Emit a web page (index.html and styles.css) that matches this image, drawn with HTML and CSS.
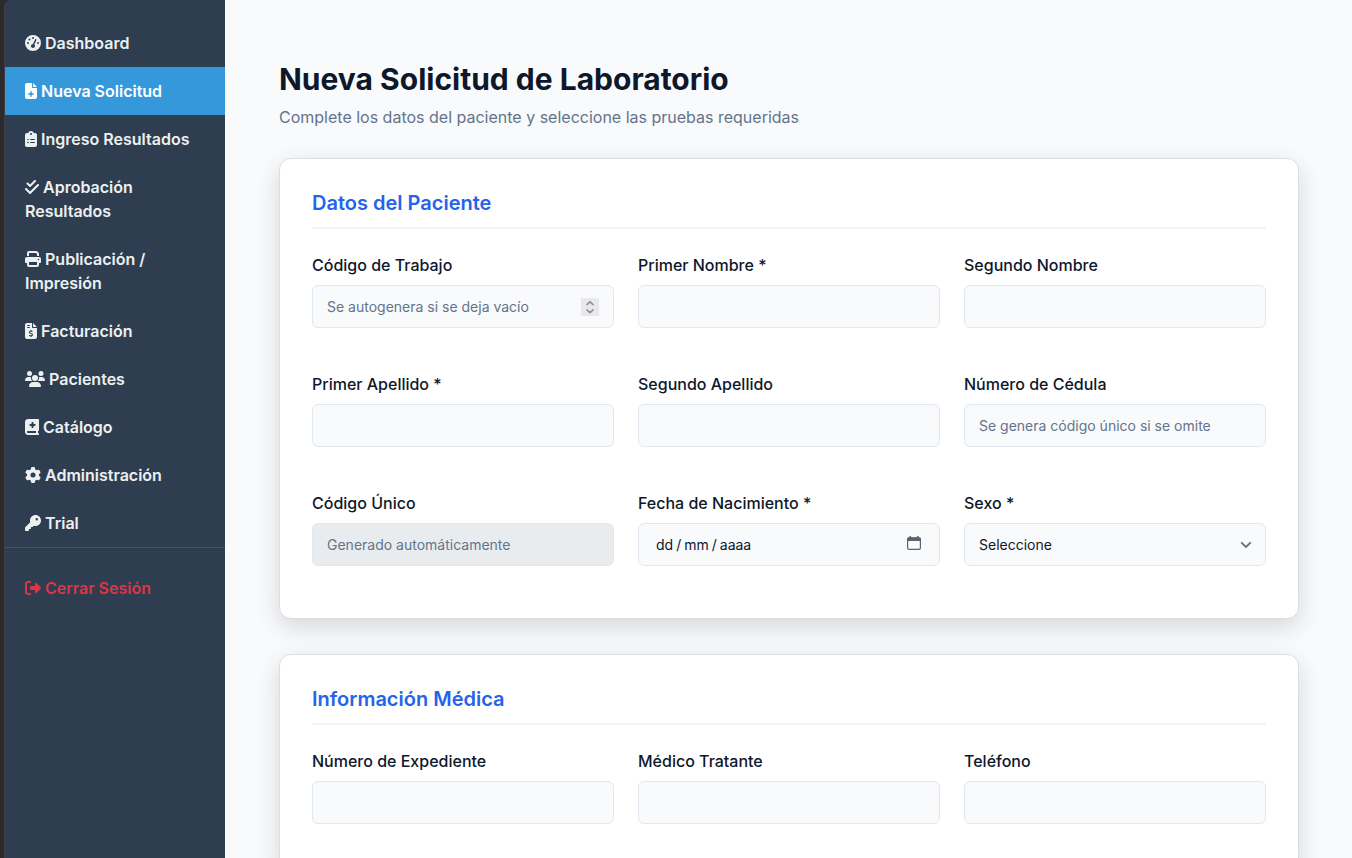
FILE: index.html
```html
<!DOCTYPE html>
<html lang="es">
<head>
<meta charset="utf-8">
<title>Nueva Solicitud de Laboratorio</title>
<link rel="stylesheet" href="styles.css">
</head>
<body>
<div class="app">
  <aside class="sidebar">
    <nav class="nav">
      <a class="nav-link"><svg class="icon" viewBox="0 0 512 512"><path d="M0 256a256 256 0 1 1 512 0A256 256 0 1 1 0 256zM288 96a32 32 0 1 0-64 0 32 32 0 1 0 64 0zM256 416c35.300 0 64-28.700 64-64c0-17.400-6.900-33.100-18.100-44.600L366 161.700c5.300-12.100-.2-26.300-12.300-31.600s-26.300 .2-31.600 12.300L257.900 288c-.6 0-1.300 0-1.900 0c-35.300 0-64 28.700-64 64s28.700 64 64 64zM176 144a32 32 0 1 0-64 0 32 32 0 1 0 64 0zM96 288a32 32 0 1 0 0-64 32 32 0 1 0 0 64zm352-32a32 32 0 1 0-64 0 32 32 0 1 0 64 0z"/></svg> Dashboard</a>
      <a class="nav-link active"><svg class="icon w12" viewBox="0 0 384 512"><path d="M64 0C28.700 0 0 28.700 0 64V448c0 35.300 28.700 64 64 64H320c35.300 0 64-28.700 64-64V160H256c-17.700 0-32-14.300-32-32V0H64zM256 0V128H384L256 0zM168 424V376H120c-13.300 0-24-10.700-24-24s10.700-24 24-24h48V280c0-13.300 10.700-24 24-24s24 10.700 24 24v48h48c13.300 0 24 10.700 24 24s-10.700 24-24 24H216v48c0 13.300-10.700 24-24 24s-24-10.700-24-24z"/></svg> Nueva Solicitud</a>
      <a class="nav-link"><svg class="icon w12" viewBox="0 0 384 512"><path d="M192 0c-41.800 0-77.400 26.700-90.500 64H64C28.700 64 0 92.700 0 128V448c0 35.300 28.700 64 64 64H320c35.300 0 64-28.700 64-64V128c0-35.300-28.700-64-64-64H282.500C269.400 26.700 233.800 0 192 0zm0 64a32 32 0 1 1 0 64 32 32 0 1 1 0-64zM72 272a24 24 0 1 1 48 0 24 24 0 1 1-48 0zm104-16H304c8.800 0 16 7.200 16 16s-7.200 16-16 16H176c-8.800 0-16-7.200-16-16s7.200-16 16-16zM72 368a24 24 0 1 1 48 0 24 24 0 1 1-48 0zm88 0c0-8.800 7.200-16 16-16H304c8.800 0 16 7.200 16 16s-7.200 16-16 16H176c-8.800 0-16-7.200-16-16z"/></svg> Ingreso Resultados</a>
      <a class="nav-link"><svg class="icon w14" viewBox="0 0 448 512"><path d="M342.600 86.600c12.500-12.500 12.500-32.800 0-45.300s-32.800-12.500-45.300 0L160 178.700l-57.400-57.400c-12.500-12.500-32.800-12.500-45.300 0s-12.500 32.800 0 45.300l80 80c12.500 12.500 32.800 12.500 45.300 0l160-160zm96 128c12.500-12.500 12.500-32.800 0-45.300s-32.800-12.500-45.300 0L160 402.700 54.600 297.400c-12.500-12.500-32.800-12.500-45.300 0s-12.500 32.800 0 45.300l128 128c12.500 12.500 32.800 12.500 45.300 0l256-256z"/></svg> Aprobación Resultados</a>
      <a class="nav-link"><svg class="icon" viewBox="0 0 512 512"><path d="M128 0C92.700 0 64 28.700 64 64v96h64V64H354.700L384 93.300V160h64V93.300c0-17-6.700-33.300-18.700-45.300L400 18.700C388 6.700 371.700 0 354.700 0H128zM384 352v32 64H128V384 368 352H384zm64 32h32c17.700 0 32-14.300 32-32V256c0-35.300-28.700-64-64-64H64c-35.300 0-64 28.700-64 64v96c0 17.700 14.300 32 32 32H64v64c0 35.300 28.700 64 64 64H384c35.300 0 64-28.700 64-64V384zM432 248a24 24 0 1 1 0 48 24 24 0 1 1 0-48z"/></svg> Publicación / Impresión</a>
      <a class="nav-link"><svg class="icon w12" viewBox="0 0 384 512"><path d="M64 0C28.700 0 0 28.700 0 64V448c0 35.300 28.700 64 64 64H320c35.300 0 64-28.700 64-64V160H256c-17.700 0-32-14.300-32-32V0H64zM256 0V128H384L256 0zM64 80c0-8.800 7.200-16 16-16h64c8.800 0 16 7.200 16 16s-7.200 16-16 16H80c-8.800 0-16-7.200-16-16zm0 64c0-8.800 7.200-16 16-16h64c8.800 0 16 7.200 16 16s-7.200 16-16 16H80c-8.800 0-16-7.200-16-16zm128 72c8.800 0 16 7.200 16 16v17.300c8.500 1.200 16.700 3.100 24.100 5.100c8.500 2.300 13.600 11 11.300 19.600s-11 13.600-19.600 11.300c-11.100-3-22-5.200-32.100-5.300c-8.400-.1-17.400 1.800-23.600 5.500c-5.700 3.400-8.100 7.300-8.100 12.800c0 3.700 1.300 6.500 7.300 10.100c6.900 4.100 16.600 7.100 29.200 10.900l.5 .1c11.300 3.400 25.300 7.600 36.300 14.600c12.100 7.600 22.400 19.700 22.700 38.200c.3 19.300-9.600 33.300-22.900 41.600c-7.700 4.800-16.400 7.600-25.100 9.100V440c0 8.800-7.200 16-16 16s-16-7.200-16-16V422.200c-11.200-2.100-21.700-5.700-30.900-8.900c-2.100-.7-4.200-1.400-6.200-2.100c-8.400-2.800-12.900-11.900-10.100-20.200s11.900-12.900 20.200-10.100c2.500 .8 4.800 1.600 7.100 2.400c13.600 4.600 24.600 8.400 36.300 8.700c9.100 .3 17.900-1.700 23.700-5.300c5.100-3.200 7.900-7.300 7.800-14c-.1-4.600-1.800-7.800-7.700-11.600c-6.800-4.300-16.500-7.400-29-11.200l-1.600-.5c-11-3.300-24.300-7.300-34.800-13.700c-12-7.200-22.600-18.900-22.700-37.300c-.1-19.400 10.800-32.800 23.800-40.500c7.500-4.400 15.800-7.200 24.100-8.700V232c0-8.800 7.200-16 16-16z"/></svg> Facturación</a>
      <a class="nav-link"><svg class="icon w20" viewBox="0 0 640 512"><path d="M144 0a80 80 0 1 1 0 160A80 80 0 1 1 144 0zM512 0a80 80 0 1 1 0 160A80 80 0 1 1 512 0zM0 298.700C0 239.800 47.800 192 106.700 192h42.700c15.900 0 31 3.500 44.600 9.700c-1.300 7.200-1.900 14.700-1.900 22.300c0 38.200 16.800 72.500 43.300 96c-.2 0-.4 0-.7 0H21.300C9.600 320 0 310.400 0 298.700zM405.300 320c-.2 0-.4 0-.7 0c26.600-23.500 43.300-57.800 43.300-96c0-7.600-.7-15-1.900-22.300c13.600-6.300 28.700-9.700 44.600-9.700h42.700C592.200 192 640 239.800 640 298.700c0 11.800-9.600 21.300-21.300 21.300H405.300zM224 224a96 96 0 1 1 192 0 96 96 0 1 1-192 0zM128 485.300C128 411.700 187.700 352 261.300 352H378.700C452.300 352 512 411.700 512 485.300c0 14.700-11.900 26.700-26.700 26.700H154.700c-14.700 0-26.700-11.900-26.700-26.700z"/></svg> Pacientes</a>
      <a class="nav-link"><svg class="icon w14" viewBox="0 0 448 512"><path d="M0 96C0 43 43 0 96 0H384h32c17.700 0 32 14.300 32 32V352c0 17.700-14.300 32-32 32v64c17.700 0 32 14.300 32 32s-14.300 32-32 32H384 96c-53 0-96-43-96-96V96zM64 416c0 17.700 14.300 32 32 32H352V384H96c-17.700 0-32 14.300-32 32zM208 112v48H160c-8.800 0-16 7.200-16 16v32c0 8.800 7.200 16 16 16h48v48c0 8.800 7.200 16 16 16h32c8.800 0 16-7.200 16-16V224h48c8.800 0 16-7.200 16-16V176c0-8.800-7.200-16-16-16H272V112c0-8.800-7.200-16-16-16H224c-8.800 0-16 7.200-16 16z"/></svg> Catálogo</a>
      <a class="nav-link"><svg class="icon" viewBox="0 0 512 512"><path d="M495.900 166.600c3.200 8.700 .5 18.400-6.400 24.600l-43.300 39.400c1.100 8.300 1.700 16.800 1.700 25.400s-.6 17.100-1.700 25.400l43.300 39.400c6.900 6.200 9.600 15.900 6.400 24.600c-4.400 11.900-9.700 23.300-15.800 34.300l-4.700 8.100c-6.600 11-14 21.400-22.100 31.200c-5.900 7.200-15.700 9.600-24.500 6.800l-55.700-17.700c-13.400 10.300-28.200 18.900-44 25.400l-12.500 57.100c-2 9.100-9 16.300-18.200 17.800c-13.800 2.300-28 3.500-42.500 3.500s-28.700-1.200-42.500-3.500c-9.200-1.500-16.200-8.700-18.200-17.800l-12.500-57.100c-15.800-6.500-30.600-15.100-44-25.400L83.100 425.900c-8.800 2.800-18.600 .3-24.500-6.800c-8.100-9.800-15.500-20.200-22.100-31.200l-4.700-8.100c-6.100-11-11.400-22.400-15.800-34.300c-3.200-8.700-.5-18.400 6.400-24.600l43.300-39.400C64.600 273.100 64 264.600 64 256s.6-17.100 1.700-25.400L22.400 191.200c-6.900-6.200-9.600-15.900-6.400-24.600c4.400-11.900 9.700-23.300 15.800-34.300l4.700-8.100c6.600-11 14-21.400 22.100-31.200c5.900-7.200 15.700-9.600 24.500-6.800l55.700 17.700c13.400-10.300 28.200-18.900 44-25.400l12.500-57.100c2-9.100 9-16.300 18.200-17.800C227.300 1.200 241.500 0 256 0s28.700 1.200 42.500 3.500c9.200 1.500 16.200 8.700 18.200 17.800l12.500 57.100c15.800 6.500 30.600 15.100 44 25.400l55.700-17.700c8.800-2.800 18.600-.3 24.500 6.800c8.100 9.800 15.500 20.200 22.100 31.200l4.700 8.100c6.100 11 11.400 22.400 15.800 34.300zM256 336a80 80 0 1 0 0-160 80 80 0 1 0 0 160z"/></svg> Administración</a>
      <a class="nav-link"><svg class="icon" viewBox="0 0 512 512"><path d="M336 352c97.200 0 176-78.800 176-176S433.200 0 336 0S160 78.800 160 176c0 18.700 2.900 36.800 8.300 53.700L7 391c-4.500 4.500-7 10.600-7 17v80c0 13.300 10.700 24 24 24h80c13.300 0 24-10.700 24-24V448h40c13.300 0 24-10.700 24-24V384h40c6.400 0 12.500-2.500 17-7l33.300-33.300c16.900 5.400 35 8.300 53.700 8.300zM376 96a40 40 0 1 1 0 80 40 40 0 1 1 0-80z"/></svg> Trial</a>
      <hr class="nav-divider">
      <a class="nav-link logout"><svg class="icon" viewBox="0 0 512 512"><path d="M377.900 105.900L500.700 228.700c7.200 7.200 11.300 17.100 11.300 27.300s-4.100 20.100-11.300 27.300L377.900 406.100c-6.400 6.400-15 9.900-24 9.900c-18.700 0-33.900-15.200-33.900-33.900V320H192c-17.700 0-32-14.300-32-32V224c0-17.700 14.300-32 32-32H320V129.900c0-18.700 15.200-33.900 33.900-33.900c9 0 17.600 3.600 24 9.900zM160 96H96c-17.700 0-32 14.300-32 32V384c0 17.700 14.300 32 32 32h64c17.700 0 32 14.300 32 32s-14.300 32-32 32H96c-53 0-96-43-96-96V128C0 75 43 32 96 32h64c17.700 0 32 14.300 32 32s-14.300 32-32 32z"/></svg> Cerrar Sesión</a>
    </nav>
  </aside>
  <main class="main">
    <h1 class="page-title">Nueva Solicitud de Laboratorio</h1>
    <p class="page-subtitle">Complete los datos del paciente y seleccione las pruebas requeridas</p>
    <section class="card">
      <h2 class="card-title">Datos del Paciente</h2>
      <div class="form-grid">
        <div class="field"><label class="label">Código de Trabajo</label>
          <div class="control"><span class="placeholder">Se autogenera si se deja vacío</span><span class="spinner"><svg class="spinner-icon" viewBox="0 0 18 18"><path d="M5.500 7 9 3.800 12.500 7M5.500 11.500 9 14.700 12.500 11.500"/></svg></span></div></div>
        <div class="field"><label class="label">Primer Nombre *</label><div class="control"></div></div>
        <div class="field"><label class="label">Segundo Nombre</label><div class="control"></div></div>
        <div class="field"><label class="label">Primer Apellido *</label><div class="control"></div></div>
        <div class="field"><label class="label">Segundo Apellido</label><div class="control"></div></div>
        <div class="field"><label class="label">Número de Cédula</label><div class="control"><span class="placeholder">Se genera código único si se omite</span></div></div>
        <div class="field"><label class="label">Código Único</label><div class="control disabled"><span class="placeholder">Generado automáticamente</span></div></div>
        <div class="field"><label class="label">Fecha de Nacimiento *</label>
          <div class="control date"><span class="date-parts"><span>dd</span><span>/</span><span>mm</span><span>/</span><span>aaaa</span></span><svg class="calendar" viewBox="0 0 14 14"><path class="calendar-fill" d="M2.500 0h1.500v1.300h6V0h1.500v1.300h.8Q14 1.300 14 3v2H0V3Q0 1.300 1.700 1.300h.8z"/><rect class="calendar-line" x=".6" y="2" width="12.800" height="11.300" rx="1.400"/></svg></div></div>
        <div class="field"><label class="label">Sexo *</label>
          <div class="control select"><span>Seleccione</span><svg class="chevron" viewBox="0 0 12 8"><path d="M1.200 1.300 6 6 10.800 1.300"/></svg></div></div>
      </div>
    </section>
    <section class="card">
      <h2 class="card-title">Información Médica</h2>
      <div class="form-grid">
        <div class="field"><label class="label">Número de Expediente</label><div class="control"></div></div>
        <div class="field"><label class="label">Médico Tratante</label><div class="control"></div></div>
        <div class="field"><label class="label">Teléfono</label><div class="control"></div></div>
      </div>
    </section>
  </main>
</div>
</body>
</html>
```
FILE: styles.css
```css
* { box-sizing: border-box; }
body {
  margin: 0;
  font-family: Inter, "Liberation Sans", sans-serif;
  font-size: 16px;
  line-height: 24px;
  color: #0f172a;
  background: #2d2a2e;
  overflow: hidden;
}
.app { display: flex; height: 858px; padding-left: 4px; overflow: hidden; }
.sidebar {
  flex: none;
  width: 221px;
  padding-top: 19px;
  background: #2e3e50;
  border-left: 1px solid #403c43;
  border-top-left-radius: 7px;
}
.nav-link { display: block; padding: 12px 20px; font-weight: 600; color: #ecf0f1; }
.nav-link.active { background: #3598db; color: #fff; }
.nav-link.logout { color: #dc3545; }
.nav-divider { margin: 0 0 16px; border: 0; border-top: 1px solid #435266; }
.icon { width: 16px; height: 16px; fill: currentColor; vertical-align: -2px; }
.icon.w12 { width: 12px; }
.icon.w14 { width: 14px; }
.icon.w20 { width: 20px; }
.main { flex: 1; padding: 61px 53px 0 54px; background: #f8fafc; }
.page-title { margin: 0 0 7px; font-size: 30px; line-height: 37px; font-weight: 700; }
.page-subtitle { margin: 0 0 29px; color: #64748b; }
.card {
  margin-bottom: 35px;
  padding: 32px 32px 52px;
  background: #fff;
  border: 1px solid #dcdee1;
  border-radius: 12px;
  box-shadow: 0 8px 24px rgba(0, 0, 0, .14);
}
.card-title {
  margin: 0 0 24px;
  padding-bottom: 12px;
  border-bottom: 2px solid #f1f5f9;
  font-size: 20px;
  line-height: 24px;
  font-weight: 600;
  color: #2563eb;
}
.form-grid { display: grid; grid-template-columns: repeat(3, 1fr); gap: 44px 24px; }
.field { display: flex; flex-direction: column; gap: 8px; }
.label { font-weight: 500; }
.control {
  display: flex;
  align-items: center;
  justify-content: space-between;
  height: 43px;
  padding: 0 14px;
  border: 1px solid #e2e8f0;
  border-radius: 6px;
  background: #f8fafc;
  font-size: 14px;
}
.control.disabled { background: #e9ecef; }
.control.date { padding: 0 18px 0 17px; }
.control.select { padding-right: 13px; }
.placeholder { color: #64748b; }
.spinner { display: flex; width: 18px; height: 18px; background: #e8e8ed; }
.spinner-icon { width: 18px; height: 18px; fill: none; stroke: #8b8b98; stroke-width: 1.600; }
.date-parts { display: flex; gap: 3px; }
.calendar { width: 14px; height: 14px; margin-bottom: 3px; }
.calendar-fill { fill: #5b6270; }
.calendar-line { fill: none; stroke: #5b6270; stroke-width: 1.200; }
.chevron { width: 12px; height: 8px; fill: none; stroke: #667085; stroke-width: 1.800; }
```
